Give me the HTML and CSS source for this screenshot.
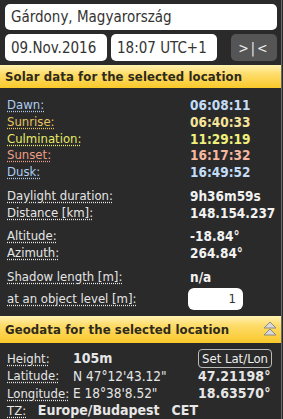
FILE: index.html
```html
<!DOCTYPE html>
<html lang="en">
<head>
    <meta charset="UTF-8">
    <meta name="viewport" content="width=device-width, initial-scale=1.0">
    <title>Sun calculator</title>
    <link rel="stylesheet" href="styles.css">
</head>
<body>
<div class="app">
    <!-- Location and time -->
    <div class="search">
        <input type="text" class="field place" value="Gárdony, Magyarország">
        <div class="when">
            <input type="text" class="field date" value="09.Nov.2016">
            <input type="text" class="field time" value="18:07 UTC+1">
            <button class="now-btn">&gt;|&lt;</button>
        </div>
    </div>

    <!-- Solar data -->
    <h2 class="bar">Solar data for the selected location</h2>
    <div class="solar">
        <div class="group">
            <div class="row dawn"><span class="lbl">Dawn:</span><span class="val">06:08:11</span></div>
            <div class="row sunrise"><span class="lbl">Sunrise:</span><span class="val">06:40:33</span></div>
            <div class="row culm"><span class="lbl">Culmination:</span><span class="val">11:29:19</span></div>
            <div class="row sunset"><span class="lbl">Sunset:</span><span class="val">16:17:32</span></div>
            <div class="row dusk"><span class="lbl">Dusk:</span><span class="val">16:49:52</span></div>
        </div>
        <div class="group">
            <div class="row"><span class="lbl">Daylight duration:</span><span class="val">9h36m59s</span></div>
            <div class="row"><span class="lbl">Distance [km]:</span><span class="val">148.154.237</span></div>
        </div>
        <div class="group">
            <div class="row"><span class="lbl">Altitude:</span><span class="val">-18.84°</span></div>
            <div class="row"><span class="lbl">Azimuth:</span><span class="val">264.84°</span></div>
        </div>
        <div class="group">
            <div class="row"><span class="lbl">Shadow length [m]:</span><span class="val">n/a</span></div>
            <div class="row level"><span class="lbl">at an object level [m]:</span><input type="text" class="field small" value="1"></div>
        </div>
    </div>

    <!-- Geodata -->
    <h2 class="bar geo-bar">Geodata for the selected location
        <svg class="collapse" width="14" height="16" viewBox="0 0 14 16">
            <path d="M7 1 L13 7 L1 7 Z" fill="#d8d8d8" stroke="#8a8a8a" stroke-width="1"/>
            <path d="M7 8 L13 14 L1 14 Z" fill="#d8d8d8" stroke="#8a8a8a" stroke-width="1"/>
        </svg>
    </h2>
    <div class="geo">
        <div class="grow"><span class="lbl">Height:</span><b class="mid">105m</b><button class="set-btn">Set Lat/Lon</button></div>
        <div class="grow"><span class="lbl">Latitude:</span><span class="mid">N 47°12'43.12"</span><b>47.21198°</b></div>
        <div class="grow"><span class="lbl">Longitude:</span><span class="mid">E 18°38'8.52"</span><b>18.63570°</b></div>
        <div class="tz"><span class="lbl">TZ:</span> <b class="zone">Europe/Budapest</b><b>CET</b></div>
    </div>
</div>
</body>
</html>
```

FILE: styles.css
```css
body {
    margin: 0;
    background-color: #2a2a2a;
    font-family: "DejaVu Sans Condensed", "DejaVu Sans", sans-serif;
    font-stretch: condensed;
    color: #e6e6e6;
}
.app {
    width: 281px;
    height: 419px;
    border-right: 1px solid #6a6a6a;
    overflow: hidden;
}
.search {
    padding: 4px 4px 4px 5px;
}
.field {
    box-sizing: border-box;
    border: none;
    border-radius: 5px;
    background-color: #fff;
    color: #333;
    font-family: inherit;
    font-size: 15px;
    padding: 0 6px;
    height: 26px;
}
.place {
    width: 272px;
    display: block;
}
.when {
    display: flex;
    margin-top: 4px;
    height: 27px;
}
.when .field {
    height: 27px;
}
.date {
    width: 102px;
}
.time {
    width: 106px;
    margin-left: 4px;
}
.now-btn {
    margin-left: auto;
    width: 46px;
    border: none;
    border-radius: 5px;
    background-color: #555;
    color: #eee;
    font-family: inherit;
    font-size: 14px;
    letter-spacing: 2px;
    padding: 0;
}
.bar {
    margin: 0;
    height: 23px;
    line-height: 23px;
    padding-left: 5px;
    font-size: 13px;
    font-weight: bold;
    letter-spacing: 0.1px;
    color: #2e2a1c;
    background: linear-gradient(#fff1b0, #fedc6a 40%, #f9c92a);
}
.solar {
    padding: 9px 0 6px 7px;
}
.group {
    margin-bottom: 7px;
}
.group:last-child {
    margin-bottom: 0;
}
.row {
    display: flex;
    height: 16.75px;
    line-height: 16.75px;
    font-size: 13px;
}
.lbl {
    width: 183px;
    flex: none;
}
.lbl, .grow .lbl, .tz .lbl {
    text-decoration: underline dotted;
    text-underline-offset: 2px;
}
.val {
    font-weight: bold;
    font-size: 13.5px;
    color: #f2f2f2;
}
.dawn .lbl, .dusk .lbl { color: #aeccf0; }
.dawn .val, .dusk .val { color: #c3dcf8; }
.sunrise .lbl { color: #e6c460; }
.sunrise .val { color: #f5e49a; }
.culm .lbl { color: #e6ea66; }
.culm .val { color: #f0f07c; }
.sunset .lbl { color: #ee9e86; }
.sunset .val { color: #f6b8a0; }
.level {
    margin-top: 2px;
    height: 22px;
    line-height: 22px;
}
.small {
    width: 55px;
    height: 22px;
    font-size: 13px;
    text-align: right;
    padding: 0 7px;
    border-radius: 6px;
    margin-left: -2px;
}
.geo-bar {
    height: 27px;
    line-height: 27px;
    display: flex;
    align-items: center;
    justify-content: space-between;
    padding-right: 4px;
    background: linear-gradient(#fff1b0, #fedc6a 35%, #f9c82a);
}
.collapse {
    display: block;
}
.geo {
    padding: 7px 0 0 7px;
    font-size: 13px;
}
.grow {
    display: flex;
    align-items: center;
    height: 17.5px;
}
.grow .lbl {
    width: 66px;
}
.mid {
    width: 125px;
    flex: none;
    font-size: 13.5px;
}
.grow b {
    font-size: 14px;
}
.set-btn {
    height: 19px;
    padding: 0 3px;
    border: 1px solid #bbb;
    border-radius: 4px;
    background: transparent;
    color: #f0f0f0;
    font-family: inherit;
    font-size: 13px;
}
.tz {
    height: 17.5px;
    line-height: 17.5px;
}
.tz .lbl {
    margin-right: 8px;
}
.tz b {
    font-size: 14px;
}
.zone {
    margin-right: 12px;
}
```
